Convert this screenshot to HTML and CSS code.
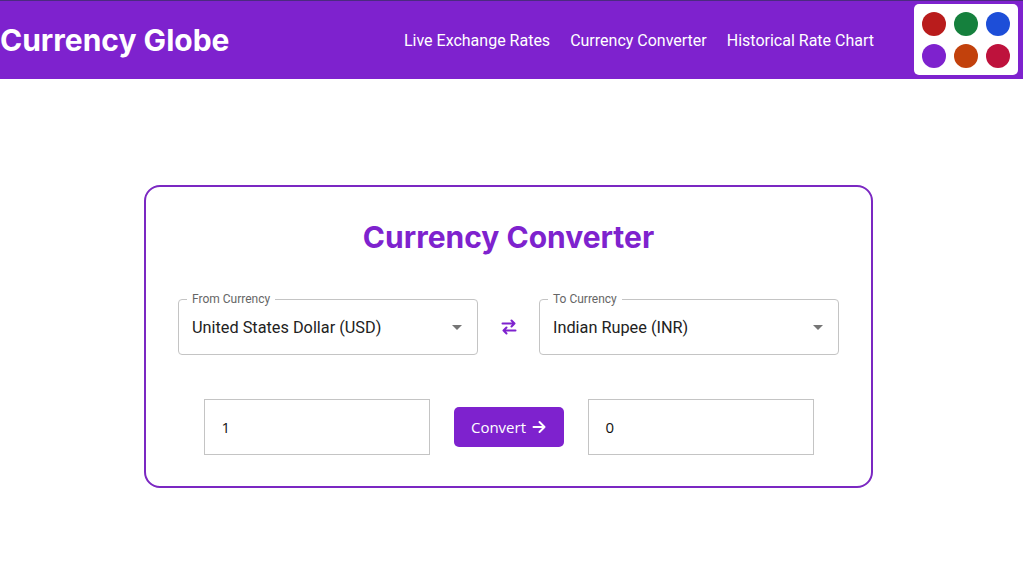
FILE: index.html
```html
<!DOCTYPE html>
<html lang="en">
<head>
<meta charset="utf-8">
<title>Currency Globe</title>
<link rel="stylesheet" href="styles.css">
</head>
<body>
<header class="topbar">
  <div class="brand">Currency Globe</div>
  <nav class="nav">
    <a href="#">Live Exchange Rates</a>
    <a href="#">Currency Converter</a>
    <a href="#">Historical Rate Chart</a>
  </nav>
  <div class="palette">
    <span class="dot red"></span>
    <span class="dot green"></span>
    <span class="dot blue"></span>
    <span class="dot purple"></span>
    <span class="dot orange"></span>
    <span class="dot rose"></span>
  </div>
</header>

<main class="main">
  <section class="card">
    <h1 class="card-title">Currency Converter</h1>
    <div class="select-row">
      <div class="field">
        <span class="field-label">From Currency</span>
        <span class="field-value">United States Dollar (USD)</span>
        <svg class="caret" width="10" height="5" viewBox="0 0 10 5"><path d="M0 0h10L5 5z" fill="#757575"/></svg>
      </div>
      <svg class="swap" width="16" height="16" viewBox="0 0 16 16" fill="none" stroke="#7e22ce" stroke-width="2" stroke-linecap="round" stroke-linejoin="round">
        <path d="M1.5 4.5h12M10.5 1.5l3 3-3 3"/>
        <path d="M14.5 11.5h-12M5.5 8.5l-3 3 3 3"/>
      </svg>
      <div class="field">
        <span class="field-label">To Currency</span>
        <span class="field-value">Indian Rupee (INR)</span>
        <svg class="caret" width="10" height="5" viewBox="0 0 10 5"><path d="M0 0h10L5 5z" fill="#757575"/></svg>
      </div>
    </div>
    <div class="amount-row">
      <div class="amount">1</div>
      <button class="convert">Convert <span class="arrow">
        <svg width="14" height="14" viewBox="0 0 14 14" fill="none" stroke="#fff" stroke-width="2" stroke-linecap="round" stroke-linejoin="round"><path d="M1.5 7h11M7.5 2l5 5-5 5"/></svg>
      </span></button>
      <div class="amount">0</div>
    </div>
  </section>
</main>
</body>
</html>
```

FILE: styles.css
```css
* { box-sizing: border-box; }

body {
  margin: 0;
  background: #fff;
  font-family: Roboto, "Liberation Sans", sans-serif;
}

.topbar {
  height: 79px;
  background: #7e22ce;
  border-top: 1px solid #4b2a80;
  display: flex;
  align-items: center;
  padding-right: 5px;
}

.brand {
  font-family: Inter, "Liberation Sans", sans-serif;
  font-weight: 700;
  font-size: 30px;
  color: #fff;
  flex: 1;
}

.nav {
  display: flex;
  gap: 20px;
  margin-right: 40px;
}

.nav a {
  color: #fff;
  text-decoration: none;
  font-size: 16px;
}

.palette {
  width: 104px;
  height: 71px;
  background: #fff;
  border-radius: 5px;
  display: grid;
  grid-template-columns: repeat(3, 24px);
  grid-template-rows: repeat(2, 24px);
  column-gap: 8px;
  row-gap: 8px;
  padding: 8px 0 0 8px;
  align-self: flex-start;
  margin-top: 3px;
}

.dot { border-radius: 50%; display: block; }
.red { background: #b91c1c; }
.green { background: #15803d; }
.blue { background: #1d4ed8; }
.purple { background: #7e22ce; }
.orange { background: #c2410c; }
.rose { background: #be123c; }

.main {
  display: flex;
  justify-content: center;
  padding: 106px 6px 0 0;
}

.card {
  width: 729px;
  border: 2px solid #7b28c2;
  border-radius: 16px;
  padding: 32px 32px 31px;
}

.card-title {
  margin: 0;
  text-align: center;
  font-family: Inter, "Liberation Sans", sans-serif;
  font-weight: 700;
  font-size: 30px;
  line-height: 36px;
  color: #7e22ce;
}

.select-row {
  display: flex;
  align-items: center;
  justify-content: space-between;
  margin-top: 44px;
}

.field {
  position: relative;
  width: 300px;
  height: 56px;
  border: 1px solid #c4c4c4;
  border-radius: 4px;
  display: flex;
  align-items: center;
  padding: 0 13px;
}

.field-label {
  position: absolute;
  top: -8px;
  left: 8px;
  padding: 0 5px;
  background: #fff;
  font-size: 12px;
  line-height: 14px;
  color: #666;
}

.field-value {
  flex: 1;
  font-size: 16.3px;
  color: #222;
}

.caret { margin-right: 2px; }

.swap { flex: none; }

.amount-row {
  display: flex;
  justify-content: center;
  align-items: center;
  gap: 24px;
  margin-top: 44px;
}

.amount {
  width: 226px;
  height: 56px;
  border: 1px solid #c4c4c4;
  display: flex;
  align-items: center;
  padding-left: 17px;
  font-family: "Open Sans", "Noto Sans", sans-serif;
  font-size: 15px;
  color: #111;
}

.convert {
  width: 110px;
  height: 40px;
  border: none;
  border-radius: 5px;
  background: #7e22ce;
  color: #fff;
  font-family: "Open Sans", "Noto Sans", sans-serif;
  font-size: 15px;
  display: flex;
  align-items: center;
  justify-content: center;
  gap: 6px;
  padding: 0;
}

.arrow { display: flex; }
```
